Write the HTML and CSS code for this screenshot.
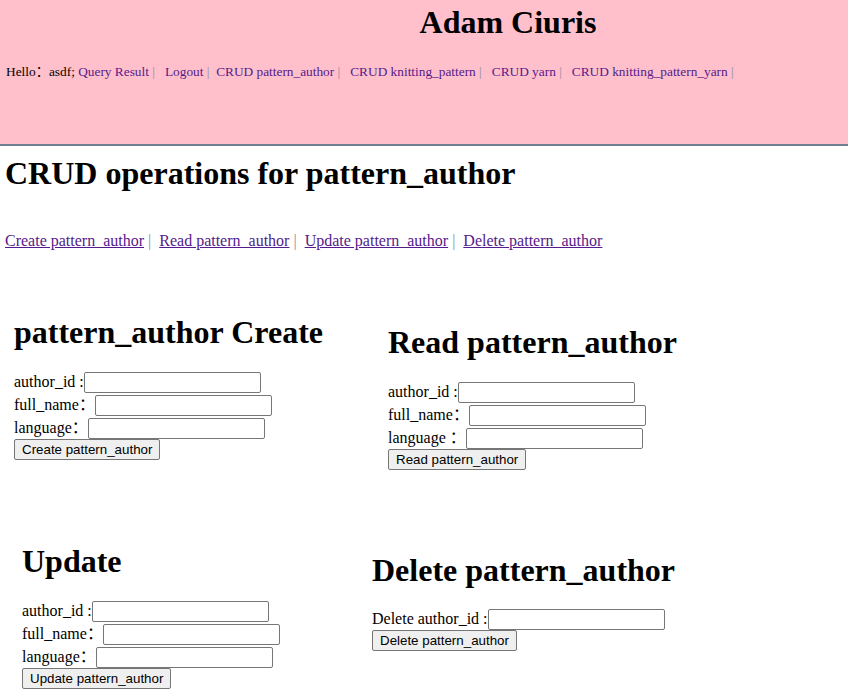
FILE: index.html
```html
<!DOCTYPE html>
<html>
<head>
<meta charset="utf-8">
<title>CRUD pattern_author</title>
<link rel="stylesheet" href="styles.css">
</head>
<body>
<header class="top">
  <h1 class="site-title">Adam Ciuris</h1>
  <div class="nav">Hello<span class="cjk">：</span>asdf; <a href="#">Query Result</a> <span class="sep">|</span>&nbsp;&nbsp; <a href="#">Logout</a> <span class="sep">|</span>&nbsp; <a href="#">CRUD pattern_author</a> <span class="sep">|</span>&nbsp;&nbsp; <a href="#">CRUD knitting_pattern</a> <span class="sep">|</span>&nbsp;&nbsp; <a href="#">CRUD yarn</a> <span class="sep">|</span>&nbsp;&nbsp; <a href="#">CRUD knitting_pattern_yarn</a> <span class="sep">|</span></div>
</header>
<main class="main">
  <h1 class="page-title">CRUD operations for pattern_author</h1>
  <p class="ops-links"><a href="#">Create pattern_author</a> <span class="sep">|</span>&nbsp; <a href="#">Read pattern_author</a> <span class="sep">|</span>&nbsp; <a href="#">Update pattern_author</a> <span class="sep">|</span>&nbsp; <a href="#">Delete pattern_author</a></p>
  <div class="grid">
    <section class="op op-create">
      <h1>pattern_author Create</h1>
      <form class="form">
        <div class="row">author_id :<input type="text"></div>
        <div class="row">full_name<span class="cjk">：</span><input type="text"></div>
        <div class="row">language<span class="cjk">：</span><input type="text"></div>
        <div class="row"><button type="button">Create pattern_author</button></div>
      </form>
    </section>
    <section class="op op-read">
      <h1>Read pattern_author</h1>
      <form class="form">
        <div class="row">author_id :<input type="text"></div>
        <div class="row">full_name<span class="cjk">：</span><input type="text"></div>
        <div class="row">language <span class="cjk">：</span><input type="text"></div>
        <div class="row"><button type="button">Read pattern_author</button></div>
      </form>
    </section>
    <section class="op op-update">
      <h1>Update</h1>
      <form class="form">
        <div class="row">author_id :<input type="text"></div>
        <div class="row">full_name<span class="cjk">：</span><input type="text"></div>
        <div class="row">language<span class="cjk">：</span><input type="text"></div>
        <div class="row"><button type="button">Update pattern_author</button></div>
      </form>
    </section>
    <section class="op op-delete">
      <h1>Delete pattern_author</h1>
      <form class="form">
        <div class="row">Delete author_id :<input type="text"></div>
        <div class="row"><button type="button">Delete pattern_author</button></div>
      </form>
    </section>
  </div>
</main>
</body>
</html>
```
FILE: styles.css
```css
html, body {
  margin: 0;
  padding: 0;
}
body {
  font-family: "Liberation Serif", "Times New Roman", serif;
  font-size: 16px;
  color: #000;
  background: #fff;
}
a {
  color: #551a8b;
}
.cjk {
  font-family: "Noto Sans CJK SC", sans-serif;
}
.sep {
  color: #8c8c9c;
}

.top {
  background: #ffc0cb;
  height: 144px;
  border-bottom: 2px solid #708090;
}
.site-title {
  margin: 0 0 0 168px;
  padding-top: 4px;
  font-size: 32px;
  line-height: 37px;
  text-align: center;
}
.nav {
  margin-top: 22px;
  padding-left: 6px;
  font-size: 13.33px;
  line-height: 15px;
}
.nav a {
  text-decoration: none;
}

.main {
  padding-left: 5px;
}
.page-title {
  margin: 9px 0 0;
  font-size: 32px;
  line-height: 37px;
}
.ops-links {
  margin: 40px 0 0;
  line-height: 18px;
}

.grid {
  margin-left: -5px;
  display: grid;
  grid-template-columns: 358px 1fr;
  grid-template-rows: 230px auto;
}
.op h1 {
  margin: 0 0 20px;
  font-size: 32px;
  line-height: 37px;
}
.op-create { padding: 64px 0 0 14px; }
.op-read { padding: 74px 0 0 30px; }
.op-update { padding: 63px 0 0 22px; }
.op-delete { padding: 72px 0 0 14px; }
.op-delete h1 { margin-bottom: 19px; }

.form {
  margin: 0;
}
.row {
  line-height: 18px;
}
.row input {
  box-sizing: border-box;
  width: 177px;
  height: 21px;
  margin: 1px 0;
  padding: 1px 2px;
  border: 1px solid #767676;
  border-radius: 2px;
  background: #fff;
  font-family: "Liberation Sans", Arial, sans-serif;
  font-size: 13.33px;
  vertical-align: baseline;
}
.row button {
  box-sizing: border-box;
  height: 21px;
  margin: -1px 0 0;
  padding: 1px 7px;
  border: 1px solid #767676;
  border-radius: 2px;
  background: #efefef;
  color: #000;
  font-family: "Liberation Sans", Arial, sans-serif;
  font-size: 13.33px;
}
```
